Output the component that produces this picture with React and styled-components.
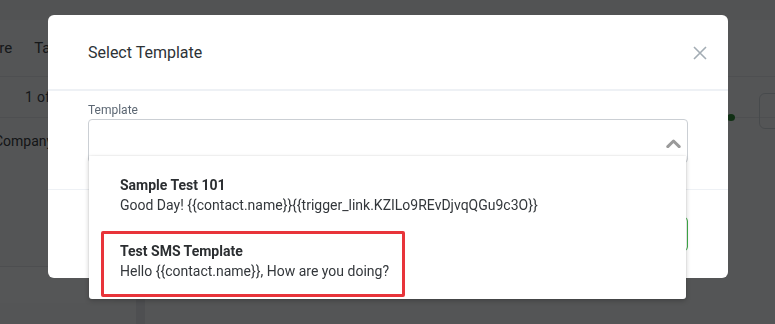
import React from "react";
import styled, { createGlobalStyle } from "styled-components";

const Global = createGlobalStyle`
  html, body { margin: 0; padding: 0; }
  body {
    font-family: Roboto, "Liberation Sans", Arial, sans-serif;
    background: #f2f5f8;
    width: 775px;
    height: 324px;
    overflow: hidden;
  }
`;

/* ---------- background page (dimmed by overlay) ---------- */
const Page = styled.div`
  width: 775px;
  height: 324px;
  display: flex;
  flex-direction: column;
  background: #f3f6f9;
  color: #3a3f45;
  font-size: 14px;
`;

const TopStrip = styled.div`
  height: 20px;
  background: #eceff3;
`;

const Tabs = styled.div`
  height: 56px;
  display: flex;
  align-items: center;
  gap: 22px;
  margin-left: -26px;
  border-bottom: 1px solid #e1e5ea;
`;

const Tab = styled.span`
  font-size: 15px;
  color: #40464d;
`;

const PagerRow = styled.div`
  height: 40px;
  display: flex;
  align-items: flex-start;
  justify-content: space-between;
  padding-left: 25px;
  border-bottom: 1px solid #e1e5ea;
`;

const PagerText = styled.span`
  line-height: 40px;
  color: #40464d;
  letter-spacing: 0.3px;
`;

const RightTools = styled.div`
  display: flex;
  align-items: flex-start;
  gap: 24px;
  margin-right: -20px;
`;

const Dot = styled.span`
  width: 8px;
  height: 7px;
  border-radius: 50%;
  background: #2f8a3a;
  margin-top: 37px;
`;

const GhostButton = styled.span`
  width: 34px;
  height: 34px;
  border: 1px solid #cfd5dc;
  border-radius: 6px;
  margin-top: 16px;
`;

const CompanyRow = styled.div`
  height: 46px;
  display: flex;
  align-items: center;
  margin-left: -6px;
`;

const Spacer = styled.div`
  flex: 1;
`;

const BottomRow = styled.div`
  height: 58px;
  display: flex;
  align-items: flex-start;
`;

const BottomCard = styled.div`
  width: 116px;
  height: 36px;
  border-top: 1px solid #dfe3e8;
  border-radius: 0 0 6px 0;
  background: #f7f9fb;
`;

const VBar = styled.div`
  width: 9px;
  height: 58px;
  margin-left: 20px;
  background: #e2e6eb;
`;

/* ---------- modal ---------- */
const Overlay = styled.div`
  position: fixed;
  inset: 0;
  background: rgba(0, 0, 0, 0.655);
  display: flex;
  align-items: flex-start;
  padding: 15px 0 0 48px;
`;

const Modal = styled.div`
  width: 680px;
  background: #ffffff;
  border-radius: 6px;
  display: flex;
  flex-direction: column;
`;

const Header = styled.div`
  height: 74px;
  display: flex;
  align-items: center;
  justify-content: space-between;
  padding: 0 21px 0 40px;
  border-bottom: 2px solid #eef1f5;
`;

const Title = styled.h3`
  margin: 0;
  font-size: 16px;
  font-weight: 400;
  color: #2d3236;
  padding-top: 1px;
`;

const CloseBtn = styled.button`
  border: 0;
  background: none;
  padding: 0;
  width: 14px;
  height: 14px;
  display: flex;
  margin-top: 2px;
`;

const Body = styled.div`
  padding: 10px 40px 26px;
`;

const Label = styled.div`
  font-size: 12px;
  line-height: 18px;
  color: #5c6773;
`;

const SelectWrap = styled.div`
  position: relative;
`;

const SelectBox = styled.div`
  height: 44px;
  box-sizing: border-box;
  border: 1px solid #cbcfd4;
  border-radius: 4px;
  display: flex;
  align-items: center;
  justify-content: flex-end;
  padding: 4px 6px 0 0;
`;

const Menu = styled.div`
  position: absolute;
  left: 1px;
  top: 37px;
  width: 597px;
  background: #ffffff;
  border-radius: 0 0 3px 3px;
  box-shadow: 0 2px 5px rgba(0, 0, 0, 0.22), 0 0 2px rgba(0, 0, 0, 0.12);
  padding: 6px 0 5px;
  z-index: 2;
`;

const Option = styled.div`
  height: 66px;
  box-sizing: border-box;
  padding: 13px 31px;
  display: flex;
  flex-direction: column;
`;

const OptionTitle = styled.div`
  font-size: 14px;
  line-height: 20px;
  font-weight: 700;
  color: #2b2e31;
`;

const OptionText = styled.div`
  font-size: 14px;
  line-height: 20px;
  color: #33373b;
  white-space: nowrap;
`;

const Highlight = styled.div`
  position: absolute;
  left: 12px;
  top: 75px;
  width: 304px;
  height: 66px;
  box-sizing: border-box;
  border: 3px solid #e8343a;
  border-radius: 2px;
  pointer-events: none;
`;

const Footer = styled.div`
  height: 88px;
  border-top: 1px solid #eef1f5;
  display: flex;
  align-items: center;
  justify-content: flex-end;
  padding: 0 40px;
`;

const PrimaryBtn = styled.button`
  height: 34px;
  padding: 0 20px;
  border: 1px solid #3fae49;
  border-radius: 4px;
  background: #ffffff;
  color: #3fae49;
  font-family: inherit;
  font-size: 14px;
`;

const options = [
  {
    title: "Sample Test 101",
    text: "Good Day! {{contact.name}}{{trigger_link.KZILo9REvDjvqQGu9c3O}}",
  },
  {
    title: "Test SMS Template",
    text: "Hello {{contact.name}}, How are you doing?",
  },
];

export default function App() {
  return (
    <>
      <Global />
      <Page>
        <TopStrip />
        <Tabs>
          <Tab>Score</Tab>
          <Tab>Tasks</Tab>
        </Tabs>
        <PagerRow>
          <PagerText>1 of 1</PagerText>
          <RightTools>
            <Dot />
            <GhostButton />
          </RightTools>
        </PagerRow>
        <CompanyRow>Company Name</CompanyRow>
        <Spacer />
        <BottomRow>
          <BottomCard />
          <VBar />
        </BottomRow>
      </Page>

      <Overlay>
        <Modal>
          <Header>
            <Title>Select Template</Title>
            <CloseBtn aria-label="Close">
              <svg width="14" height="14" viewBox="0 0 14 14">
                <path
                  d="M1 1 L13 13 M13 1 L1 13"
                  stroke="#a3acb4"
                  strokeWidth="1.6"
                  fill="none"
                />
              </svg>
            </CloseBtn>
          </Header>
          <Body>
            <Label>Template</Label>
            <SelectWrap>
              <SelectBox>
                <svg width="15" height="9" viewBox="0 0 15 9">
                  <path
                    d="M1.8 7.6 L7.5 2 L13.2 7.6"
                    stroke="#9a9a9a"
                    strokeWidth="3"
                    fill="none"
                    strokeLinecap="round"
                    strokeLinejoin="round"
                  />
                </svg>
              </SelectBox>
              <Menu>
                {options.map((o) => (
                  <Option key={o.title}>
                    <OptionTitle>{o.title}</OptionTitle>
                    <OptionText>{o.text}</OptionText>
                  </Option>
                ))}
                <Highlight />
              </Menu>
            </SelectWrap>
          </Body>
          <Footer>
            <PrimaryBtn>Select</PrimaryBtn>
          </Footer>
        </Modal>
      </Overlay>
    </>
  );
}
